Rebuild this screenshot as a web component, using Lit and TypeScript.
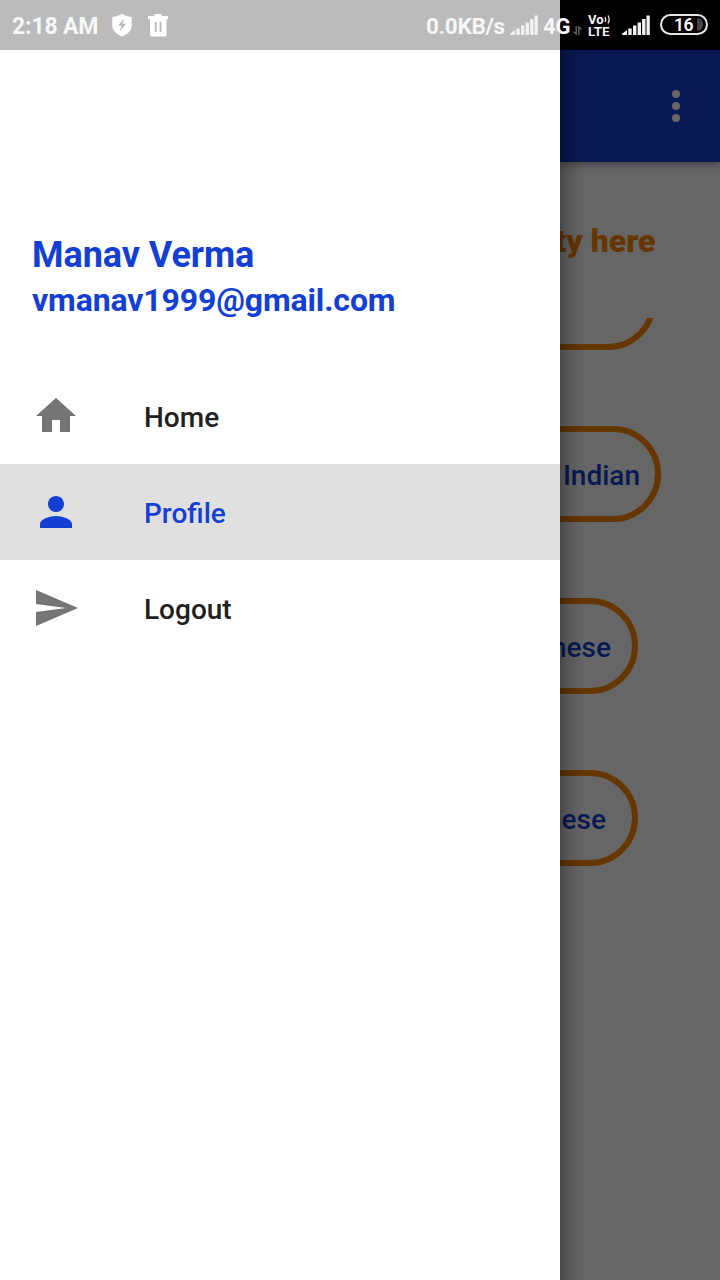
import { LitElement, html, css, svg } from "lit";
import { customElement } from "lit/decorators.js";
import { classMap } from "lit/directives/class-map.js";

const signal = html`<svg class="signal" width="28" height="20" viewBox="0 0 28 20" fill="currentColor">
  <path d="M0 20v-1.200l5-3.800V20zM6.300 13.500h3.400V20H6.300zM11 10.600h3.400V20H11zM15.600 7.400H19V20h-3.400zM20.100 4h3.400V20h-3.400zM24.500 .5h3.300V20h-3.300z"/>
</svg>`;

@customElement("status-bar")
class StatusBar extends LitElement {
  static styles = css`
    :host {
      display: flex;
      align-items: center;
      box-sizing: border-box;
      height: 50px;
      background: linear-gradient(to right, #bbb 560px, #000 560px);
      color: #f7f7f7;
      font: 700 23px/50px Roboto, sans-serif;
      white-space: nowrap;
    }
    svg { display: block; flex: none; }
    .time { width: 99px; padding: 3px 0 0 12px; letter-spacing: -0.15px; }
    .trash { margin-left: 14px; }
    .rate { width: 85px; margin-left: 257px; padding-top: 2px; font-size: 22.5px; letter-spacing: -0.3px; }
    .signal { margin: -1px 0 0 -1px; color: #f2f2f2; }
    .net { width: 29px; margin-left: 5px; padding-top: 3px; font-size: 22px; }
    .arrows { margin: 10px 0 0 1px; }
    .volte {
      display: flex;
      flex-direction: column;
      gap: 0;
      width: 24px;
      margin: 0 11px 0 6px;
      font: 700 13px/12px Roboto, sans-serif;
    }
    .vo { display: flex; align-items: center; height: 11px; line-height: 11px; }
    .lte { height: 12px; font-size: 13.5px; font-weight: 600; }
    .battery {
      display: flex;
      align-items: center;
      box-sizing: border-box;
      width: 48px;
      height: 21px;
      margin: -1px 0 0 10px;
      padding-left: 12px;
      gap: 4px;
      border: 2px solid #e6e6e6;
      border-radius: 11px;
      font: 600 17.5px/17px Roboto, sans-serif;
      letter-spacing: -0.6px;
    }
    .num { padding-top: 2px; }
    .rest { width: 6px; height: 13px; border-radius: 0 6px 6px 0; background: #444; }
  `;
  render() {
    return html`
      <span class="time">2:18 AM</span>
      <svg class="shield" width="22" height="24" viewBox="0 0 22 24">
        <path fill="#fff" d="M11 .5c3 2.200 6 3 9.700 3.400V13c0 5-5 8.500-9.700 10.700C6.300 21.500 1.300 18 1.300 13V3.900C5 3.500 8 2.700 11 .5z"/>
        <path fill="#bbb" d="M13.300 5.500L7 12.800h3.300L8.700 18.500l6.500-7.700h-3.500z"/>
      </svg>
      <svg class="trash" width="22" height="24" viewBox="0 0 22 24">
        <path fill="#fff" fill-rule="evenodd" d="M7.500 1h7v2H21v3.300h-1.500V22q0 1.500-1.500 1.500H4.500Q3 23.500 3 22V6.300H1V3h6.500zM7.800 9v10h1.900V9zM12.600 9v10h1.900V9z"/>
      </svg>
      <span class="rate">0.0KB/s</span>
      ${signal}
      <span class="net">4G</span>
      <svg class="arrows" width="9" height="9" viewBox="0 0 9 9" fill="none" stroke="#666" stroke-width="1.400">
        <path d="M3.200 0v8L.5 5.500M5.800 9V1l2.700 2.500"/>
      </svg>
      <span class="volte">
        <span class="vo">Vo<svg width="7" height="9" viewBox="0 0 7 9" fill="none" stroke="#f2f2f2" stroke-width="1.300"><path d="M1 2q1.300 2.500 0 5M4 .5q2.300 4 0 8"/></svg></span>
        <span class="lte">LTE</span>
      </span>
      ${signal}
      <span class="battery"><span class="num">16</span><i class="rest"></i></span>
    `;
  }
}

interface Item { label: string; icon: string; active?: boolean; }

@customElement("nav-drawer")
class NavDrawer extends LitElement {
  static styles = css`
    :host {
      display: block;
      box-sizing: border-box;
      padding-top: 232px;
      background: #fff;
      font-family: Roboto, sans-serif;
    }
    header { height: 136px; padding-left: 32px; color: #143fd3; font-weight: 700; }
    .name { font-size: 36px; line-height: 46px; letter-spacing: -0.06px; }
    .mail { font-size: 32px; line-height: 44px; letter-spacing: -0.13px; }
    .item {
      display: flex;
      align-items: center;
      height: 96px;
      padding-left: 32px;
      gap: 64px;
      color: #757575;
      font-size: 28px;
      font-weight: 500;
    }
    .label { color: #212121; padding-top: 3px; }
    .active { background: #e0e0e0; }
    .active, .active .label { color: #143fd3; }
    svg { width: 48px; height: 48px; fill: currentColor; }
  `;
  items: Item[] = [
    { label: "Home", icon: "M10 20v-6h4v6h5v-8h3L12 3 2 12h3v8z" },
    { label: "Profile", icon: "M12 12c2.210 0 4-1.790 4-4s-1.790-4-4-4-4 1.790-4 4 1.790 4 4 4zm0 2c-2.670 0-8 1.340-8 4v2h16v-2c0-2.660-5.330-4-8-4z", active: true },
    { label: "Logout", icon: "M2.010 21L23 12 2.010 3 2 10l15 2-15 2z" },
  ];
  render() {
    return html`
      <header><div class="name">Manav Verma</div><div class="mail">vmanav1999@gmail.com</div></header>
      <nav>${this.items.map((i) => html`
        <div class=${classMap({ item: true, active: !!i.active })}>
          <svg viewBox="0 0 24 24">${svg`<path d=${i.icon}/>`}</svg>
          <span class="label">${i.label}</span>
        </div>`)}</nav>
    `;
  }
}

@customElement("dimmed-page")
class DimmedPage extends LitElement {
  static styles = css`
    :host {
      display: flex;
      flex-direction: column;
      position: relative;
      overflow: hidden;
      background: #666;
      font-family: Roboto, sans-serif;
    }
    :host::after {
      content: "";
      position: absolute;
      inset: 0 auto 0 0;
      width: 26px;
      background: linear-gradient(to right, rgba(0,0,0,.3), rgba(0,0,0,.16) 30%, rgba(0,0,0,.05) 70%, transparent);
    }
    .toolbar {
      display: flex;
      justify-content: flex-end;
      align-items: center;
      flex: none;
      box-sizing: border-box;
      height: 162px;
      padding: 50px 40px 0 0;
      background: #081953;
      box-shadow: 0 2px 8px rgba(0,0,0,.4);
    }
    .title {
      display: flex;
      justify-content: flex-end;
      height: 156px;
      box-sizing: border-box;
      padding: 60px 64.5px 0 0;
      color: #663600;
      font-size: 32px;
      line-height: 38px;
      font-weight: 900;
      white-space: nowrap;
    }
    .list { display: flex; flex-direction: column; flex: 1; gap: 76px; overflow: hidden; }
    .pill {
      display: flex;
      justify-content: flex-end;
      align-items: center;
      box-sizing: border-box;
      flex: none;
      height: 96px;
      margin-left: -60px;
      border: 6px solid #663600;
      border-radius: 48px;
      color: #081953;
      font-size: 28px;
      font-weight: 500;
      padding-top: 2px;
    }
    .first { margin-top: -64px; margin-right: 64px; }
    .wide { margin-right: 59px; padding-right: 15px; }
    .third { margin-right: 82px; padding-right: 21px; }
    .fourth { margin-right: 82px; padding-right: 26px; }
  `;
  render() {
    return html`
      <div class="toolbar">
        <svg width="8" height="32" viewBox="0 0 8 32" fill="#666"><circle cx="4" cy="4" r="4"/><circle cx="4" cy="16" r="4"/><circle cx="4" cy="28" r="4"/></svg>
      </div>
      <div class="title">ty here</div>
      <div class="list">
        <div class="pill first"></div>
        <div class="pill wide">Indian</div>
        <div class="pill third">nese</div>
        <div class="pill fourth">nese</div>
      </div>
    `;
  }
}

@customElement("app-root")
class AppRoot extends LitElement {
  static styles = css`
    :host { display: grid; grid-template-columns: 560px 160px; position: relative; width: 720px; height: 1280px; overflow: hidden; }
    status-bar { position: absolute; inset: 0 0 auto 0; z-index: 2; }
  `;
  render() {
    return html`<nav-drawer></nav-drawer><dimmed-page></dimmed-page><status-bar></status-bar>`;
  }
}
